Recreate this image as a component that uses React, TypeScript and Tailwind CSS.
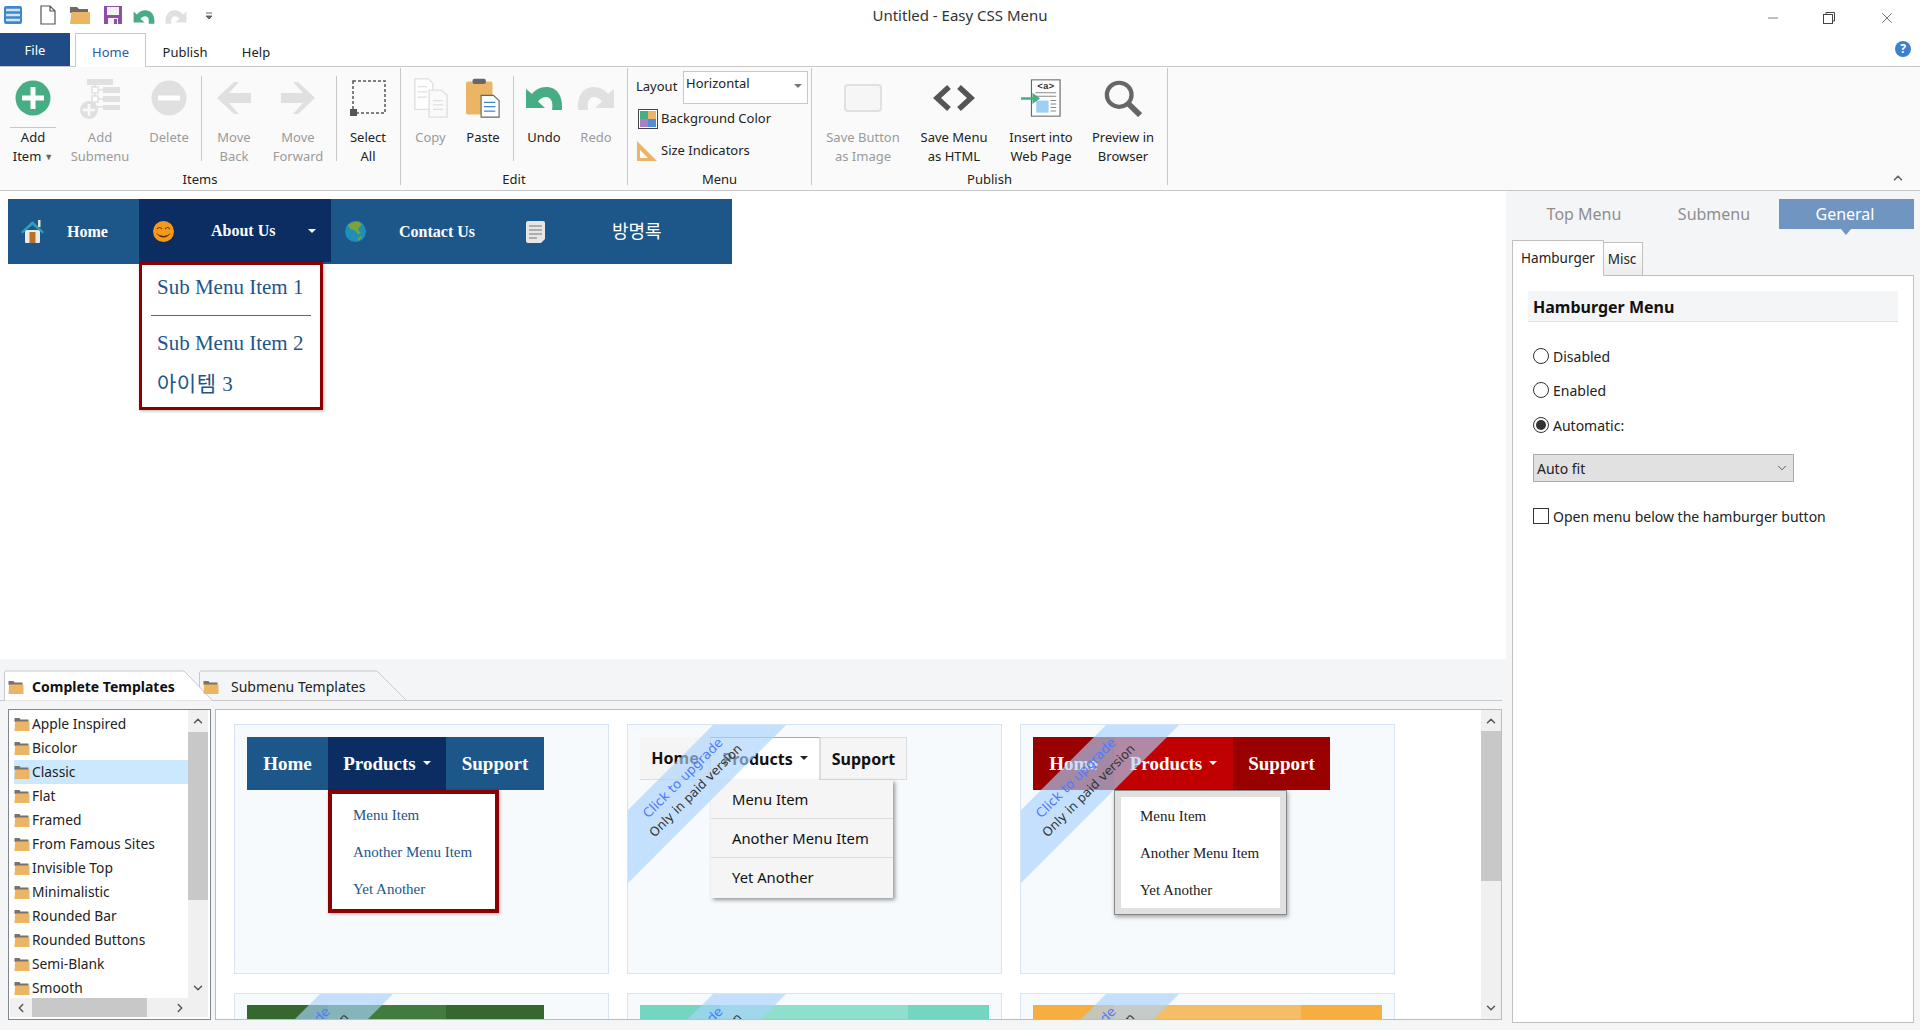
import React from "react";
import { ChevronUp, ChevronDown, ChevronLeft, ChevronRight, Minus, X } from "lucide-react";

const Folder = () => (
  <svg width="16" height="16" viewBox="0 0 16 16" className="shrink-0">
    <path d="M0.5 2h5l1 1.5h8V6H0.5z" fill="#77736c" />
    <path d="M0.5 15L1.2 5.5H15.5V15z" fill="#ecb565" />
  </svg>
);

const UndoIcon = ({ c, w, h, flip }: { c: string; w: number; h: number; flip?: boolean }) => (
  <svg width={w} height={h} viewBox="0 0 38 23" style={flip ? { transform: "scaleX(-1)" } : undefined}>
    <path d="M1 2V21H20L13 14.500C17 9 25 8 27 15C27.500 18 27.500 20 27 23H37C38 10 33 0 21 0C15 0 10 3 7 7Z" fill={c} />
  </svg>
);

type BtnProps = { w: number; ml?: number; l1: string; l2?: string; off?: boolean; caret?: boolean; children: React.ReactNode };
const Btn = ({ w, ml = 0, l1, l2, off, caret, children }: BtnProps) => (
  <div className="flex flex-col items-center shrink-0" style={{ width: w, marginLeft: ml }}>
    <div className="h-[60px] w-full flex items-center justify-center">{children}</div>
    <div className={`text-center text-[13px] leading-[19px] whitespace-nowrap ${off ? "text-[#9a9a9a]" : "text-[#222]"}`}>
      <div>{l1}</div>
      <div className="flex items-center justify-center gap-[3px]">
        {l2}
        {caret && <span className="text-[9px] text-[#666]">▼</span>}
      </div>
    </div>
  </div>
);
const Sep = ({ ml = 0 }: { ml?: number }) => <div className="w-px h-[85px] mt-[8px] bg-[#c8c8c8] shrink-0" style={{ marginLeft: ml }} />;

const Group = ({ w, label, children }: { w: number; label: string; children: React.ReactNode }) => (
  <div className="flex flex-col shrink-0 border-r border-[#c8c8c8] h-[117px] mt-px" style={{ width: w }}>
    <div className="flex h-[101px] shrink-0">{children}</div>
    <div className="text-center text-[13px] leading-[20px] text-[#222]">{label}</div>
  </div>
);

const Band = () => (
  <div className="absolute left-0 top-0 w-[158px] h-[158px] bg-[#abd3fd]/65 [clip-path:polygon(85px_0,158px_0,0_158px,0_85px)] z-10 pointer-events-none">
    <span className="absolute left-[55px] top-[53px] -translate-x-1/2 -translate-y-1/2 -rotate-45 whitespace-nowrap text-[13px] text-[#4d7cff] font-['DejaVu_Sans']">Click to upgrade</span>
    <span className="absolute left-[68px] top-[66px] -translate-x-1/2 -translate-y-1/2 -rotate-45 whitespace-nowrap text-[12.500px] text-[#333] font-['DejaVu_Sans']">Only in paid version</span>
  </div>
);

const Caret = ({ c }: { c: string }) => (
  <span className="inline-block ml-[7px] mb-[3px] border-x-[4px] border-x-transparent border-t-[4px]" style={{ borderTopColor: c }} />
);

const Card1 = () => (
  <div className="relative h-[250px] bg-[#f6fafd] border border-[#d5e5f3] overflow-hidden">
    <div className="ml-[12px] mt-[12px] flex h-[53px] w-[297px] text-white font-bold text-[19px] font-['Liberation_Serif'] items-stretch">
      <div className="w-[81px] bg-[#1d5689] flex items-center justify-center pt-[1px]">Home</div>
      <div className="w-[118px] bg-[#0b2d62] flex items-center justify-center pt-[1px]">Products<Caret c="#fff" /></div>
      <div className="w-[98px] bg-[#1d5689] flex items-center justify-center pt-[1px]">Support</div>
    </div>
    <div className="absolute left-[93px] top-[65px] w-[171px] h-[123px] bg-white border-4 border-[#8b0000] shadow-[1px_1px_3px_rgba(0,0,0,0.3)] font-['Liberation_Serif'] text-[15px] text-[#1d5689] pl-[21px] pt-[3px] leading-[37px]">
      <div>Menu Item</div>
      <div>Another Menu Item</div>
      <div>Yet Another</div>
    </div>
  </div>
);

const Card2 = () => (
  <div className="relative h-[250px] bg-[#f6fafd] border border-[#d5e5f3] overflow-hidden">
    <Band />
    <div className="ml-[12px] mt-[12px] flex h-[43px] w-[267px] text-[#111] font-bold text-[16px] items-stretch">
      <div className="w-[70px] bg-[#f5f5f5] border-b border-[#ddd] flex items-center justify-center">Home</div>
      <div className="w-[110px] bg-white border-t border-t-[#f39c1f] border-x border-x-[#ddd] flex items-center justify-center">Products<Caret c="#222" /></div>
      <div className="w-[87px] bg-[#f5f5f5] border border-[#ddd] flex items-center justify-center">Support</div>
    </div>
    <div className="absolute left-[83px] top-[55px] w-[182px] h-[118px] bg-[#f5f5f5] shadow-[2px_2px_4px_rgba(0,0,0,0.4)] text-[14.800px] text-[#111]">
      <div className="h-[39px] flex items-center pl-[21px] border-b border-[#ddd]">Menu Item</div>
      <div className="h-[39px] flex items-center pl-[21px] border-b border-[#ddd]">Another Menu Item</div>
      <div className="h-[39px] flex items-center pl-[21px]">Yet Another</div>
    </div>
  </div>
);

const Card3 = () => (
  <div className="relative h-[250px] bg-[#f6fafd] border border-[#d5e5f3] overflow-hidden">
    <Band />
    <div className="ml-[12px] mt-[12px] flex h-[53px] w-[297px] text-white font-bold text-[19px] font-['Liberation_Serif'] items-stretch">
      <div className="w-[81px] bg-[#990000] flex items-center justify-center pt-[1px]">Home</div>
      <div className="w-[119px] bg-[#c00000] flex items-center justify-center pt-[1px]">Products<Caret c="#fff" /></div>
      <div className="w-[97px] bg-[#990000] flex items-center justify-center pt-[1px]">Support</div>
    </div>
    <div className="absolute left-[93px] top-[65px] w-[173px] h-[125px] bg-white border border-[#888] shadow-[1px_2px_4px_rgba(0,0,0,0.35)] font-['Liberation_Serif'] text-[15px] text-[#222]">
      <div className="m-[6px] h-[111px] bg-white pl-[19px] pt-[1px] leading-[37px]">
        <div>Menu Item</div>
        <div>Another Menu Item</div>
        <div>Yet Another</div>
      </div>
      <div className="absolute inset-0 border-[6px] border-[#e0e0e0] pointer-events-none" />
    </div>
  </div>
);

const Stub = ({ w, split, a, b }: { w: number; split: number; a: string; b: string }) => (
  <div className="relative h-[250px] bg-[#f6fafd] border border-[#d5e5f3] overflow-hidden">
    <Band />
    <div className="ml-[12px] mt-[11px] flex h-[53px]" style={{ width: w, backgroundColor: a }}>
      <div className="ml-[81px]" style={{ width: split - 81, backgroundColor: b }} />
    </div>
  </div>
);

const folders = ["Apple Inspired", "Bicolor", "Classic", "Flat", "Framed", "From Famous Sites", "Invisible Top", "Minimalistic", "Rounded Bar", "Rounded Buttons", "Semi-Blank", "Smooth"];

export default function App() {
  return (
    <div className="w-[1920px] h-[1030px] overflow-hidden bg-white flex flex-col font-['Noto_Sans',sans-serif] text-[#222]">
      {/* Title bar */}
      <div className="relative h-[33px] shrink-0 flex items-center">
        <div className="flex items-center mt-[-4px]">
          <svg width="22" height="22" viewBox="0 0 22 22" className="ml-[2px]">
            <rect x="2" y="2" width="18" height="18" rx="2" fill="#3f87cd" />
            <path d="M4 6h14M4 11h14M4 16h14" stroke="#cfe4f7" strokeWidth="2.400" />
          </svg>
          <svg width="20" height="22" viewBox="0 0 20 22" className="ml-[14px]">
            <path d="M3 2h9l5 5v13H3z M12 2v5h5" fill="#fff" stroke="#555" strokeWidth="1.200" />
          </svg>
          <svg width="22" height="22" viewBox="0 0 22 22" className="ml-[11px]">
            <path d="M1 3h7l2 2h9v4H1z" fill="#6f6b64" />
            <path d="M1 20L2.500 8H21v12z" fill="#ecb565" />
          </svg>
          <svg width="22" height="22" viewBox="0 0 22 22" className="ml-[11px]">
            <path d="M2 2h18v18H2z" fill="#8e4ea8" />
            <rect x="5" y="3" width="12" height="8" fill="#f1f1f1" />
            <rect x="6" y="14" width="10" height="6" fill="#f1f1f1" />
            <rect x="12" y="15" width="3" height="5" fill="#8e4ea8" />
          </svg>
          <div className="ml-[9px] mt-[4px]"><UndoIcon c="#46ad84" w={22} h={14} /></div>
          <div className="ml-[10px] mt-[4px]"><UndoIcon c="#e0e0e0" w={22} h={14} flip /></div>
          <svg width="8" height="8" viewBox="0 0 8 8" className="ml-[18px] mt-[2px]">
            <path d="M1 1h6M1 4h6L4 7z" stroke="#666" strokeWidth="1" fill="#666" />
          </svg>
        </div>
        <div className="absolute left-0 right-0 top-[3px] text-center text-[15px] leading-[24px] text-[#333]">Untitled - Easy CSS Menu</div>
        <div className="absolute right-[24px] top-[9px] flex items-center text-[#444]">
          <Minus size={16} strokeWidth={1} />
          <svg width="14" height="14" viewBox="0 0 14 14" fill="none" stroke="#444" strokeWidth="1" className="ml-[41px] mr-[42px]">
            <rect x="1.500" y="3.500" width="9" height="9" />
            <path d="M4 3V1.500h8.500V10H11" />
          </svg>
          <X size={18} strokeWidth={1} />
        </div>
      </div>
      {/* Ribbon tabs */}
      <div className="relative h-[33px] shrink-0 flex items-start text-[13px]">
        <div className="w-[70px] h-[33px] bg-[#1f4c87] text-white flex items-center justify-center pt-[3px]">File</div>
        <div className="ml-[5px] w-[71px] h-[34px] bg-white border border-b-0 border-[#c8c8c8] text-[#2e5a9c] flex items-center justify-center z-10 pt-[5px]">Home</div>
        <div className="w-[78px] h-[33px] flex items-center justify-center pt-[6px]">Publish</div>
        <div className="w-[64px] h-[33px] flex items-center justify-center pt-[6px]">Help</div>
        <div className="absolute right-[9px] top-[8px] w-[16px] h-[16px] rounded-full bg-[#3f7fd0] text-white text-[12px] font-bold leading-[16px] text-center">?</div>
      </div>
      {/* Ribbon */}
      <div className="relative h-[125px] shrink-0 bg-[#fafafa] border-y border-[#c8c8c8] flex">
        <Group w={401} label="Items">
          <Btn w={62} ml={2} l1="Add" l2="Item" caret>
            <div className="relative h-[60px] w-[46px] flex items-center justify-center border-b border-[#c8c8c8]">
              <svg width="36" height="36" viewBox="0 0 36 36">
                <circle cx="18" cy="18" r="17.500" fill="#46ad84" />
                <path d="M18 7v22M7 18h22" stroke="#fff" strokeWidth="5" />
              </svg>
            </div>
          </Btn>
          <Btn w={68} ml={2} l1="Add" l2="Submenu" off>
            <svg width="42" height="42" viewBox="0 0 42 42" fill="#e0e0e0" className="mt-[1px]">
              <rect x="8" y="1" width="26" height="6" />
              <rect x="24" y="9" width="17" height="6" />
              <rect x="24" y="18" width="17" height="6" />
              <rect x="24" y="27" width="17" height="5" />
              <path d="M16 7v20M18 12h6M18 21h6M18 29h6" stroke="#e0e0e0" strokeWidth="1.500" />
              <rect x="13" y="9" width="6" height="6" fill="#fff" stroke="#e0e0e0" strokeWidth="1.500" />
              <rect x="13" y="18" width="6" height="6" fill="#fff" stroke="#e0e0e0" strokeWidth="1.500" />
              <circle cx="10" cy="32" r="9" />
              <path d="M10 26v12M4 32h12" stroke="#fafafa" strokeWidth="2.500" />
            </svg>
          </Btn>
          <Btn w={64} ml={3} l1="Delete" off>
            <svg width="36" height="36" viewBox="0 0 36 36">
              <circle cx="18" cy="18" r="17.500" fill="#e0e0e0" />
              <path d="M7 18h22" stroke="#fff" strokeWidth="5" />
            </svg>
          </Btn>
          <Sep />
          <Btn w={58} ml={3} l1="Move" l2="Back" off>
            <svg width="36" height="34" viewBox="0 0 36 34" fill="#e0e0e0">
              <path d="M18 1L1 17l17 16h5L13 22h22V12H13L23 1z" />
            </svg>
          </Btn>
          <Btn w={70} l1="Move" l2="Forward" off>
            <svg width="36" height="34" viewBox="0 0 36 34" fill="#e0e0e0">
              <path d="M18 1l17 16-17 16h-5L23 22H1V12h22L13 1z" />
            </svg>
          </Btn>
          <Sep ml={3} />
          <Btn w={62} l1="Select" l2="All">
            <svg width="36" height="36" viewBox="0 0 36 36" fill="none">
              <rect x="3" y="1" width="32" height="32" stroke="#555" strokeWidth="1.500" strokeDasharray="3 2" />
              <rect x="0" y="29" width="7" height="7" fill="#555" />
            </svg>
          </Btn>
        </Group>
        <Group w={227} label="Edit">
          <Btn w={55} ml={2} l1="Copy" off>
            <svg width="36" height="40" viewBox="0 0 38 46" fill="#fff" stroke="#e0e0e0" strokeWidth="1.500" preserveAspectRatio="none">
              <path d="M2 1h14l5 5v30H2z" />
              <path d="M17 14h13l6 6v25H17z" fill="#fafafa" />
              <path d="M5 10h10M5 16h10M5 22h10M21 26h11M21 31h11M21 36h11" />
            </svg>
          </Btn>
          <Btn w={50} l1="Paste">
            <svg width="36" height="40" viewBox="0 0 38 46" preserveAspectRatio="none">
              <rect x="1" y="4" width="28" height="38" rx="2" fill="#ecb565" />
              <rect x="8" y="1" width="14" height="6" rx="2" fill="#666" />
              <path d="M17 20h13l6 6v19H17z" fill="#fff" stroke="#666" strokeWidth="1.200" />
              <path d="M20 28h12M20 33h12M20 38h12" stroke="#3f87cd" strokeWidth="1.500" />
            </svg>
          </Btn>
          <Sep ml={5} />
          <Btn w={60} l1="Undo">
            <UndoIcon c="#46ad84" w={38} h={23} />
          </Btn>
          <Btn w={44} l1="Redo" off>
            <UndoIcon c="#e0e0e0" w={38} h={23} flip />
          </Btn>
        </Group>
        <Group w={184} label="Menu">
          <div className="pl-[8px] pt-[3px] text-[13px] text-[#222] w-full">
            <div className="flex items-start h-[35px]">
              <span className="w-[47px] mt-[5px] leading-[20px]">Layout</span>
              <div className="w-[125px] h-[33px] bg-white border border-[#c8c8c8] pl-[2px] pt-[1px] leading-[20px] relative">
                Horizontal
                <span className="absolute right-[5px] top-[12px] border-x-[4px] border-x-transparent border-t-[4px] border-t-[#777]" />
              </div>
            </div>
            <div className="flex items-center h-[25px]">
              <svg width="20" height="20" viewBox="0 0 20 20" className="ml-[2px] mr-[3px]">
                <rect x="0.500" y="0.500" width="19" height="19" fill="#fff" stroke="#444" />
                <rect x="2" y="2" width="8" height="8" fill="#46ad84" />
                <rect x="10" y="2" width="8" height="8" fill="#ecb565" />
                <rect x="2" y="10" width="8" height="8" fill="#a97fc6" />
                <rect x="10" y="10" width="8" height="8" fill="#4d8fd6" />
              </svg>
              Background Color
            </div>
            <div className="flex items-center h-[25px] mt-[7px]">
              <svg width="20" height="20" viewBox="0 0 20 20" className="ml-[1px] mr-[4px]">
                <path d="M0 0L20 20H0z" fill="#ecb565" />
                <path d="M3 9L11 17H3z" fill="#fff" />
              </svg>
              Size Indicators
            </div>
          </div>
        </Group>
        <Group w={356} label="Publish">
          <Btn w={86} ml={8} l1="Save Button" l2="as Image" off>
            <div className="w-[38px] h-[28px] rounded-[4px] border-2 border-[#e0e0e0] bg-[#f6f6f6]" />
          </Btn>
          <Btn w={88} ml={4} l1="Save Menu" l2="as HTML">
            <svg width="42" height="28" viewBox="0 0 42 28" fill="none" stroke="#555" strokeWidth="5.500">
              <path d="M16 3L4 14l12 11M26 3l12 11-12 11" />
            </svg>
          </Btn>
          <Btn w={82} ml={2} l1="Insert into" l2="Web Page">
            <svg width="40" height="38" viewBox="0 0 42 44" preserveAspectRatio="none">
              <rect x="11" y="1" width="30" height="42" fill="#fff" stroke="#666" strokeWidth="1.200" />
              <text x="26" y="12" textAnchor="middle" fontSize="10" fontFamily="Liberation Mono" fontWeight="700" fill="#333">&lt;a&gt;</text>
              <path d="M15 16h22M15 20h22M31 25h6M31 29h6M31 33h6M31 37h6" stroke="#888" strokeWidth="1.200" />
              <rect x="16" y="25" width="13" height="14" fill="#9ed0f5" />
              <path d="M0 21h12v-5l8 6.500-8 6.500v-5H0z" fill="#46ad84" />
            </svg>
          </Btn>
          <Btn w={84} ml={-1} l1="Preview in" l2="Browser">
            <svg width="38" height="37" viewBox="0 0 40 40" fill="none" stroke="#666" preserveAspectRatio="none">
              <circle cx="16" cy="16" r="13" strokeWidth="4.500" />
              <path d="M26 26l12 12" strokeWidth="6" />
            </svg>
          </Btn>
        </Group>
        <ChevronUp size={14} strokeWidth={3} className="absolute right-[15px] bottom-[5px] text-[#666]" />
      </div>
      {/* Main */}
      <div className="flex-1 flex min-h-0">
        <div className="w-[1506px] shrink-0 flex flex-col">
          <div className="relative h-[468px] shrink-0 bg-white pt-[8px] pl-[8px]">
            <div className="flex h-[65px] w-[724px] bg-[#1d5689] text-white font-bold text-[16px] font-['Liberation_Serif']">
              <div className="w-[131px] flex items-center pl-[13px]">
                <svg width="23" height="23" viewBox="0 0 23 23" className="shrink-0">
                  <rect x="17" y="0" width="2.500" height="7" fill="#e9e4d8" />
                  <path d="M4 10h15v12a1 1 0 0 1-1 1H5a1 1 0 0 1-1-1z" fill="#eceae4" />
                  <path d="M11.500 1L0 12l1.500 1.500L11.500 5l10 8.500L23 12z" fill="#2ba0bd" />
                  <rect x="8.500" y="12" width="6" height="11" fill="#b5722d" />
                </svg>
                <span className="ml-[23px] mt-[1px]">Home</span>
              </div>
              <div className="relative w-[192px] h-[63px] bg-[#0b2d62] flex items-center pl-[14px]">
                <svg width="21" height="21" viewBox="0 0 21 21" className="shrink-0 mt-[2px]">
                  <circle cx="10.500" cy="10.500" r="10.500" fill="#f39a1e" />
                  <path d="M4 8q2.500-3 5 0M12 8q2.500-3 5 0" stroke="#7a3d00" strokeWidth="1.200" fill="none" />
                  <path d="M3 12q7.500 6 15 0q-7.500 9-15 0z" fill="#5a2c00" />
                </svg>
                <span className="ml-[37px]">About Us</span>
                <span className="absolute right-[15px] top-[30px] border-x-[4px] border-x-transparent border-t-[4px] border-t-white" />
              </div>
              <div className="w-[183px] flex items-center pl-[14px]">
                <svg width="21" height="21" viewBox="0 0 21 21" className="shrink-0">
                  <circle cx="10.500" cy="10.500" r="10.500" fill="#1f8fb8" />
                  <path d="M3 4q5-4 11-3.500l3 3-3 3-1 3 3 2-3 2-3-4-4-1-2-2z M13 17l3-2 1 1-4 4z" fill="#7ba33a" />
                </svg>
                <span className="ml-[33px] mt-[1px]">Contact Us</span>
              </div>
              <div className="w-[218px] flex items-center pl-[12px]">
                <svg width="19" height="22" viewBox="0 0 19 22" className="shrink-0">
                  <path d="M2 0h15a2 2 0 0 1 2 2v16l-4 4H2a2 2 0 0 1-2-2V2a2 2 0 0 1 2-2z" fill="#e6e6e6" />
                  <path d="M3 5h13M3 9h13M3 13h13M3 17h8" stroke="#9a9a9a" strokeWidth="1.300" />
                </svg>
                <span className="ml-[67px] mt-[-3px] font-['Noto_Sans_CJK_KR'] font-normal text-[18px]">방명록</span>
              </div>
            </div>
            <div className="absolute left-[139px] top-[71px] w-[184px] h-[148px] bg-white border-[3px] border-[#8b0000] shadow-[1px_1px_3px_rgba(0,0,0,0.3)] font-['Liberation_Serif','Noto_Sans_CJK_KR',serif] text-[21px] text-[#1d5689]">
              <div className="h-[46px] pl-[15px] flex items-center">Sub Menu Item 1</div>
              <div className="mx-[9px] my-[4px] h-px bg-[#666]" />
              <div className="h-[46px] pl-[15px] pt-[2px] flex items-center">Sub Menu Item 2</div>
              <div className="h-[38px] pl-[15px] flex items-center tracking-[0.5px]">아이템 3</div>
            </div>
          </div>
          <div className="flex-1 min-h-0 bg-[#f4f5f7] pt-[11px] flex flex-col">
            <div className="relative h-[31px] shrink-0 border-b border-[#c8c8c8] mr-[4px] text-[14px]">
              <svg width="210" height="31" viewBox="0 0 210 31" className="absolute left-[199px] top-0" fill="#f4f5f7" stroke="#c8c8c8">
                <path d="M0.500 30V3q0-2 2-2H178L207 30" />
              </svg>
              <svg width="212" height="31" viewBox="0 0 212 31" className="absolute left-[4px] top-0" fill="#fff" stroke="#c8c8c8">
                <path d="M0.500 31V3q0-2 2-2H180L209 31z" />
              </svg>
              <div className="absolute left-[8px] top-[6px] flex items-center gap-[8px] font-bold text-[#111]"><Folder /><span>Complete Templates</span></div>
              <div className="absolute left-[203px] top-[6px] flex items-center gap-[12px] text-[#222]"><Folder /><span>Submenu Templates</span></div>
            </div>
            <div className="flex mt-[8px] h-[311px] shrink-0">
              <div className="relative ml-[8px] w-[203px] h-[311px] bg-white border border-[#80868c] overflow-hidden">
                <div className="pl-[5px] pt-[2px] w-[180px]">
                  {folders.map((f) => (
                    <div key={f} className={`h-[24px] flex items-center gap-[2px] text-[13.800px] whitespace-nowrap ${f === "Classic" ? "bg-[#cce8ff]" : ""}`}>
                      <Folder />
                      {f}
                    </div>
                  ))}
                </div>
                <div className="absolute right-[2px] top-0 bottom-[20px] w-[20px] bg-[#f0f0f0] flex flex-col">
                  <div className="h-[22px] flex items-center justify-center"><ChevronUp size={14} strokeWidth={2.500} className="text-[#555]" /></div>
                  <div className="h-[168px] bg-[#c8c8c8]" />
                  <div className="flex-1 flex items-end justify-center pb-[4px]"><ChevronDown size={14} strokeWidth={2.500} className="text-[#555]" /></div>
                </div>
                <div className="absolute left-[1px] right-[2px] bottom-[2px] h-[19px] bg-[#f0f0f0] flex items-center">
                  <ChevronLeft size={14} strokeWidth={2.500} className="text-[#555] ml-[4px]" />
                  <div className="ml-[4px] w-[115px] h-[19px] bg-[#c8c8c8]" />
                  <ChevronRight size={14} strokeWidth={2.500} className="text-[#555] ml-[26px]" />
                </div>
              </div>
              <div className="relative ml-[4px] w-[1287px] h-[311px] bg-white border border-[#bcbcbc] overflow-hidden">
                <div className="ml-[18px] mt-[14px] grid grid-cols-[375px_375px_375px] gap-x-[18px] gap-y-[19px]">
                  <Card1 />
                  <Card2 />
                  <Card3 />
                  <Stub w={297} split={199} a="#36672f" b="#417c3e" />
                  <Stub w={349} split={268} a="#74d6c1" b="#8fdfcc" />
                  <Stub w={349} split={268} a="#f5ae3f" b="#f5be66" />
                </div>
                <div className="absolute right-0 top-0 bottom-0 w-[20px] bg-[#f0f0f0] flex flex-col z-20">
                  <div className="h-[21px] flex items-center justify-center"><ChevronUp size={14} strokeWidth={2.500} className="text-[#555]" /></div>
                  <div className="h-[150px] bg-[#c8c8c8]" />
                  <div className="flex-1 flex items-end justify-center pb-[4px]"><ChevronDown size={14} strokeWidth={2.500} className="text-[#555]" /></div>
                </div>
              </div>
            </div>
          </div>
        </div>
        {/* Right panel */}
        <div className="flex-1 bg-[#f4f5f7] flex flex-col pl-[6px] pr-[8px]">
          <div className="relative flex h-[30px] mt-[8px] ml-[7px] shrink-0 text-[16px]">
            <div className="w-[130px] flex items-center justify-center text-[#8e8e8e]">Top Menu</div>
            <div className="w-[130px] flex items-center justify-center text-[#8e8e8e]">Submenu</div>
            <div className="relative w-[135px] bg-[#7195c1] text-white flex items-center justify-center pr-[3px]">
              General
              <span className="absolute left-[62px] top-[30px] border-x-[5px] border-x-transparent border-t-[6px] border-t-[#7195c1]" />
            </div>
          </div>
          <div className="flex items-end mt-[12px] h-[35px] shrink-0 text-[13.500px] relative z-10 -mb-px">
            <div className="w-[92px] h-[36px] bg-white border border-b-0 border-[#c0c0c0] flex items-center justify-center">Hamburger</div>
            <div className="w-[39px] h-[34px] bg-gradient-to-b from-white to-[#ececec] border border-l-0 border-[#c0c0c0] flex items-center justify-center pr-[2px]">Misc</div>
          </div>
          <div className="h-[748px] bg-white border border-[#c0c0c0] px-[15px] pt-[15px] text-[14px]">
            <div className="h-[31px] bg-[#f4f5f7] border-b border-[#e0e0e0] pl-[5px] pt-[2px] flex items-center font-bold text-[16px] text-[#111]">Hamburger Menu</div>
            <div className="flex items-center h-[34px] mt-[17px] pl-[5px] gap-[4px]">
              <span className="w-[16px] h-[16px] rounded-full border border-[#333] bg-white" />Disabled
            </div>
            <div className="flex items-center h-[34px] pl-[5px] gap-[4px]">
              <span className="w-[16px] h-[16px] rounded-full border border-[#333] bg-white" />Enabled
            </div>
            <div className="flex items-center h-[34px] mt-[1px] pl-[5px] gap-[4px]">
              <span className="w-[16px] h-[16px] rounded-full border border-[#333] bg-white flex items-center justify-center"><span className="w-[10px] h-[10px] rounded-full bg-[#333]" /></span>Automatic:
            </div>
            <div className="ml-[5px] mt-[12px] w-[261px] h-[28px] bg-[#e1e1e1] border border-[#adadad] flex items-center justify-between pl-[3px] pr-[4px]">
              Auto fit
              <ChevronDown size={14} strokeWidth={1.200} className="text-[#222]" />
            </div>
            <div className="flex items-center h-[20px] mt-[24px] pl-[5px] gap-[4px]">
              <span className="w-[16px] h-[16px] border border-[#333] bg-white" />Open menu below the hamburger button
            </div>
          </div>
        </div>
      </div>
    </div>
  );
}
